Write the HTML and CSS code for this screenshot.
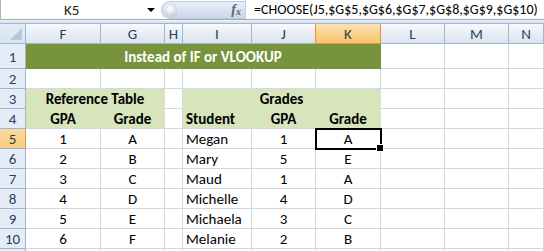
FILE: index.html
```html
<!DOCTYPE html>
<html lang="en">
<head>
    <meta charset="UTF-8">
    <title>CHOOSE instead of IF or VLOOKUP</title>
    <link rel="stylesheet" href="styles.css">
</head>
<body>
    <div class="window">
        <div class="formula-bar">
            <div class="name-box">
                <span class="cell-ref">K5</span>
                <span class="drop"></span>
            </div>
            <div class="fx-btn">
                <span class="knob"></span>
                <span class="fx">f<sub>x</sub></span>
            </div>
            <div class="formula">=CHOOSE(J5,$G$5,$G$6,$G$7,$G$8,$G$9,$G$10)</div>
        </div>
        <div class="split"></div>

        <div class="sheet">
            <!-- column headers -->
            <div class="corner"><span class="tri"></span></div>
            <div class="ch">F</div>
            <div class="ch">G</div>
            <div class="ch">H</div>
            <div class="ch">I</div>
            <div class="ch">J</div>
            <div class="ch active">K</div>
            <div class="ch">L</div>
            <div class="ch">M</div>
            <div class="ch">N</div>

            <!-- row 1 -->
            <div class="rh">1</div>
            <div class="c title span6">Instead of IF or VLOOKUP</div>
            <div class="c"></div>
            <div class="c"></div>
            <div class="c"></div>

            <!-- row 2 -->
            <div class="rh">2</div>
            <div class="c"></div>
            <div class="c"></div>
            <div class="c"></div>
            <div class="c"></div>
            <div class="c"></div>
            <div class="c"></div>
            <div class="c"></div>
            <div class="c"></div>
            <div class="c"></div>

            <!-- row 3 -->
            <div class="rh">3</div>
            <div class="c band bold mid span2">Reference Table</div>
            <div class="c"></div>
            <div class="c band bold mid span3">Grades</div>
            <div class="c"></div>
            <div class="c"></div>
            <div class="c"></div>

            <!-- row 4 -->
            <div class="rh">4</div>
            <div class="c band bold mid head">GPA</div>
            <div class="c band bold mid head">Grade</div>
            <div class="c"></div>
            <div class="c band bold head">Student</div>
            <div class="c band bold mid head">GPA</div>
            <div class="c band bold mid head">Grade</div>
            <div class="c"></div>
            <div class="c"></div>
            <div class="c"></div>

            <!-- row 5 -->
            <div class="rh active">5</div>
            <div class="c mid">1</div>
            <div class="c mid">A</div>
            <div class="c"></div>
            <div class="c">Megan</div>
            <div class="c mid">1</div>
            <div class="c mid sel">A</div>
            <div class="c"></div>
            <div class="c"></div>
            <div class="c"></div>

            <!-- row 6 -->
            <div class="rh">6</div>
            <div class="c mid">2</div>
            <div class="c mid">B</div>
            <div class="c"></div>
            <div class="c">Mary</div>
            <div class="c mid">5</div>
            <div class="c mid">E</div>
            <div class="c"></div>
            <div class="c"></div>
            <div class="c"></div>

            <!-- row 7 -->
            <div class="rh">7</div>
            <div class="c mid">3</div>
            <div class="c mid">C</div>
            <div class="c"></div>
            <div class="c">Maud</div>
            <div class="c mid">1</div>
            <div class="c mid">A</div>
            <div class="c"></div>
            <div class="c"></div>
            <div class="c"></div>

            <!-- row 8 -->
            <div class="rh">8</div>
            <div class="c mid">4</div>
            <div class="c mid">D</div>
            <div class="c"></div>
            <div class="c">Michelle</div>
            <div class="c mid">4</div>
            <div class="c mid">D</div>
            <div class="c"></div>
            <div class="c"></div>
            <div class="c"></div>

            <!-- row 9 -->
            <div class="rh">9</div>
            <div class="c mid">5</div>
            <div class="c mid">E</div>
            <div class="c"></div>
            <div class="c">Michaela</div>
            <div class="c mid">3</div>
            <div class="c mid">C</div>
            <div class="c"></div>
            <div class="c"></div>
            <div class="c"></div>

            <!-- row 10 -->
            <div class="rh">10</div>
            <div class="c mid">6</div>
            <div class="c mid">F</div>
            <div class="c"></div>
            <div class="c">Melanie</div>
            <div class="c mid">2</div>
            <div class="c mid">B</div>
            <div class="c"></div>
            <div class="c"></div>
            <div class="c"></div>

            <!-- row 11, only its top edge is in view -->
            <div class="rh"></div>
            <div class="c"></div>
            <div class="c"></div>
            <div class="c"></div>
            <div class="c"></div>
            <div class="c"></div>
            <div class="c"></div>
            <div class="c"></div>
            <div class="c"></div>
            <div class="c"></div>
        </div>
    </div>
</body>
</html>
```

FILE: styles.css
```css
:root {
    --grid: #d0d7e5;
    --head-line: #9eb6ce;
    --olive: #77933c;
    --olive-light: #d8e4bc;
    --sel-orange: #f29436;
}

* {
    box-sizing: border-box;
    margin: 0;
    padding: 0;
}

body {
    width: 544px;
    height: 251px;
    overflow: hidden;
    background: white;
    font-family: Carlito, Lato, 'Liberation Sans', sans-serif;
    font-size: 15px;
    color: #000;
}

.window {
    width: 544px;
    height: 251px;
    overflow: hidden;
}

/* formula bar */
.formula-bar {
    height: 20px;
    display: flex;
    align-items: stretch;
    border-left: 1px solid #a5b7cf;
    border-bottom: 1px solid #a7abb0;
    background: white;
    font-size: 14px;
}

.name-box {
    width: 159px;
    display: flex;
    align-items: center;
    position: relative;
}

.cell-ref {
    margin-left: 63px;
    color: #2a1a10;
    font-size: 15px;
}

.drop {
    position: absolute;
    left: 146px;
    top: 8px;
    width: 0;
    height: 0;
    border-left: 4px solid transparent;
    border-right: 4px solid transparent;
    border-top: 4px solid #000;
}

.fx-btn {
    width: 84px;
    margin: 1px 0 0 1px;
    height: 18px;
    border-radius: 9px 0 0 9px;
    background: linear-gradient(#e9eff8, #c9d7ea);
    border: 1px solid #b9c9de;
    border-right: none;
    display: flex;
    align-items: center;
    justify-content: space-between;
    padding: 0 4px 0 3px;
}

.knob {
    width: 12px;
    height: 14px;
    border-radius: 50%;
    background: radial-gradient(circle at 40% 40%, #ffffff 0%, #dfe4ea 45%, #a9b2bd 100%);
}

.fx {
    font-family: 'Liberation Serif', serif;
    font-style: italic;
    font-weight: bold;
    font-size: 14px;
    color: #5b6472;
    line-height: 1;
}

.fx sub {
    font-size: 10px;
    vertical-align: -1px;
}

.formula {
    flex: 1;
    padding-left: 8px;
    display: flex;
    align-items: center;
    white-space: nowrap;
    border-left: 1px solid #c5d1e0;
}

.split {
    height: 4px;
    background: #dbe5f1;
    border-bottom: 1px solid #9eb6ce;
    border-top: 1px solid #edf2f9;
}

/* sheet grid */
.sheet {
    display: grid;
    grid-template-columns: 26px 75px 64px 18px 69px 64px 65px 64px 64px 1fr;
    grid-template-rows: 20px 25px repeat(9, 20px) 20px;
}

.corner {
    background: linear-gradient(#e4ecf7, #d7e2f1);
    border-right: 1px solid var(--head-line);
    border-bottom: 1px solid var(--head-line);
    position: relative;
}

.tri {
    position: absolute;
    right: 3px;
    bottom: 3px;
    width: 0;
    height: 0;
    border-left: 12px solid transparent;
    border-bottom: 12px solid #b6c6dc;
}

.ch {
    background: linear-gradient(#f7f9fc 0%, #e7edf5 55%, #dbe3ee 100%);
    border-right: 1px solid var(--head-line);
    border-bottom: 1px solid var(--head-line);
    display: flex;
    align-items: center;
    justify-content: center;
    color: #27415f;
    padding-top: 1px;
}

.ch.active {
    background: linear-gradient(#fce3b3 0%, #f8d18c 55%, #f4c574 100%);
    border-bottom: 1px solid var(--sel-orange);
    border-left: 1px solid var(--sel-orange);
    border-right: 1px solid var(--sel-orange);
    margin-left: -1px;
    color: #3c3a36;
}

.rh {
    background: #e4ecf7;
    border-right: 1px solid var(--head-line);
    border-bottom: 1px solid var(--head-line);
    display: flex;
    align-items: center;
    justify-content: center;
    color: #27415f;
    padding-top: 1px;
}

.rh.active {
    background: linear-gradient(#f9dba2, #f6cd83);
    border-right: 1px solid var(--sel-orange);
    color: #3c3a36;
}

.c {
    border-right: 1px solid var(--grid);
    border-bottom: 1px solid var(--grid);
    display: flex;
    align-items: flex-end;
    padding: 0 3px 0;
    white-space: nowrap;
    line-height: 18px;
}

.mid {
    justify-content: center;
}

.bold {
    font-weight: bold;
}

.band {
    background: var(--olive-light);
    border-color: var(--olive-light);
}

.band.head {
    border-bottom-color: var(--grid);
}

.title {
    background: var(--olive);
    border-color: var(--olive);
    color: white;
    font-weight: bold;
    justify-content: center;
    padding-bottom: 2px;
}

.span2 {
    grid-column: span 2;
}

.span3 {
    grid-column: span 3;
}

.span6 {
    grid-column: span 6;
}

.sel {
    position: relative;
    outline: 2px solid #000;
    outline-offset: -1px;
    z-index: 1;
}

.sel::after {
    content: '';
    position: absolute;
    right: -4px;
    bottom: -4px;
    width: 6px;
    height: 6px;
    background: #000;
    border: 1px solid white;
}
```
